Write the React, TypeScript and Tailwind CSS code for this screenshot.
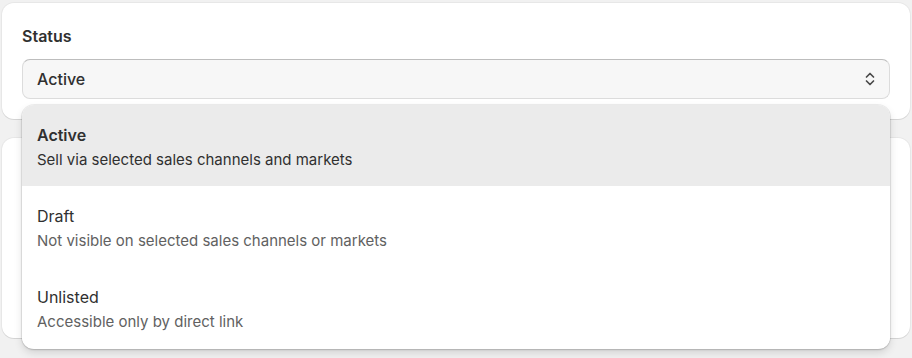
import React from "react";

const items = [
  { title: "Active", desc: "Sell via selected sales channels and markets", selected: true },
  { title: "Draft", desc: "Not visible on selected sales channels or markets", selected: false },
  { title: "Unlisted", desc: "Accessible only by direct link", selected: false },
];

export default function App() {
  return (
    <div
      className="relative w-[912px] h-[358px] bg-[#f1f1f1] overflow-hidden px-[2px] pt-[3px]"
      style={{ fontFamily: "Inter, 'Noto Sans', sans-serif" }}
    >
      <div className="flex flex-col gap-[19px]">
        <div className="bg-white rounded-[12px] h-[116px] px-[20px] pt-[23px] shadow-[0_1px_0_rgba(0,0,0,0.08),0_0_0_1px_rgba(0,0,0,0.04)]">
          <div className="text-[16px] leading-[20px] font-semibold text-[#303030]">Status</div>
          <div className="mt-[13px] h-[40px] rounded-[8px] bg-[#f7f7f7] border border-[#dcdcdc] border-t-[#bdbdbd] flex items-center justify-between pl-[14px] pr-[12px]">
            <span className="text-[16px] font-medium text-[#303030]">Active</span>
            <svg width="14" height="18" viewBox="0 0 14 18" fill="none" stroke="#4a4a4a" strokeWidth="1.7" strokeLinecap="round" strokeLinejoin="round">
              <path d="M3.5 7 L7 3.5 L10.5 7" />
              <path d="M3.5 11 L7 14.5 L10.5 11" />
            </svg>
          </div>
        </div>
        <div className="bg-white rounded-[12px] h-[200px] shadow-[0_1px_0_rgba(0,0,0,0.08),0_0_0_1px_rgba(0,0,0,0.04)]" />
      </div>

      <div className="absolute left-[22px] top-[105px] w-[868px] h-[244px] bg-white rounded-[12px] overflow-hidden shadow-[0_4px_8px_rgba(0,0,0,0.12),0_0_0_1px_rgba(0,0,0,0.06),0_1px_2px_rgba(0,0,0,0.15)]">
        {items.map((it) => (
          <div
            key={it.title}
            className={`px-[15px] pt-[20px] pb-[16px] flex flex-col gap-[5px] ${it.selected ? "bg-[#ebebeb]" : "bg-white"}`}
          >
            <div className={`text-[16px] leading-[20px] text-[#303030] ${it.selected ? "font-semibold" : "font-normal"}`}>
              {it.title}
            </div>
            <div className={`text-[15px] leading-[20px] ${it.selected ? "text-[#303030]" : "text-[#616161]"}`}>{it.desc}</div>
          </div>
        ))}
      </div>
    </div>
  );
}
